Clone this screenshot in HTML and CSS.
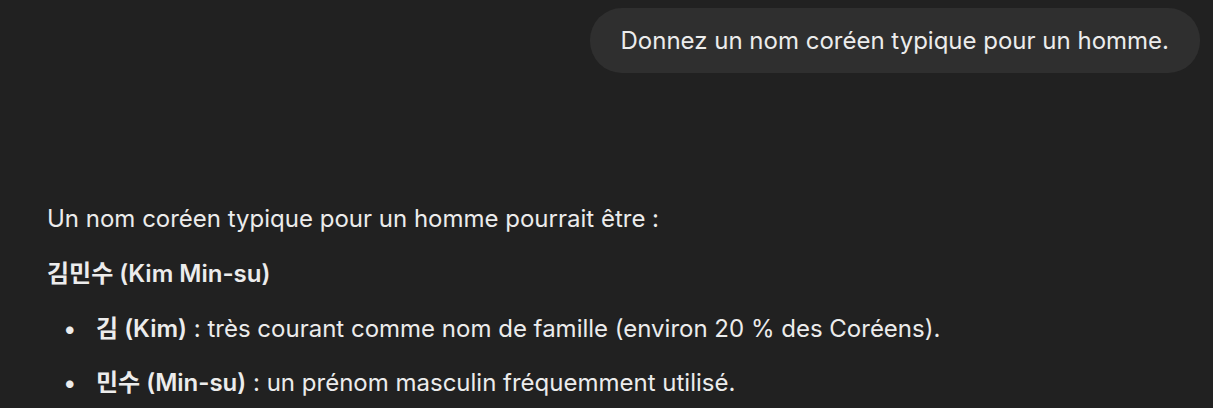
FILE: index.html
```html
<!DOCTYPE html>
<html lang="fr">
<head>
<meta charset="utf-8">
<link rel="stylesheet" href="styles.css">
</head>
<body>
<main class="thread">
  <div class="user-row">
    <div class="bubble">Donnez un nom coréen typique pour un homme.</div>
  </div>
  <div class="answer">
    <p>Un nom coréen typique pour un homme pourrait être :</p>
    <p><strong>김민수 (Kim Min-su)</strong></p>
    <ul>
      <li><strong>김 (Kim)</strong> : très courant comme nom de famille (environ 20 % des Coréens).</li>
      <li><strong>민수 (Min-su)</strong> : un prénom masculin fréquemment utilisé.</li>
    </ul>
  </div>
</main>
</body>
</html>
```
FILE: styles.css
```css
html, body {
  margin: 0;
  padding: 0;
  background: #212121;
}
body {
  font-family: Inter, "Noto Sans CJK KR", sans-serif;
  font-size: 24px;
  line-height: 35px;
  color: #ececec;
}
.thread {
  padding: 8px 13px 0 47px;
}
.user-row {
  display: flex;
  justify-content: flex-end;
}
.bubble {
  background: #2f2f2f;
  border-radius: 32px;
  padding: 15px 31px;
  color: #ececec;
}
.answer {
  margin-top: 128px;
}
.answer p {
  margin: 0 0 20px;
}
.answer strong {
  font-weight: 600;
}
.answer ul {
  margin: 0;
  padding-left: 49px;
  list-style: none;
}
.answer li {
  margin-bottom: 19px;
}
.answer li::before {
  content: "•";
  display: inline-block;
  width: 33px;
  margin-left: -33px;
  font-size: 24px;
}
```
